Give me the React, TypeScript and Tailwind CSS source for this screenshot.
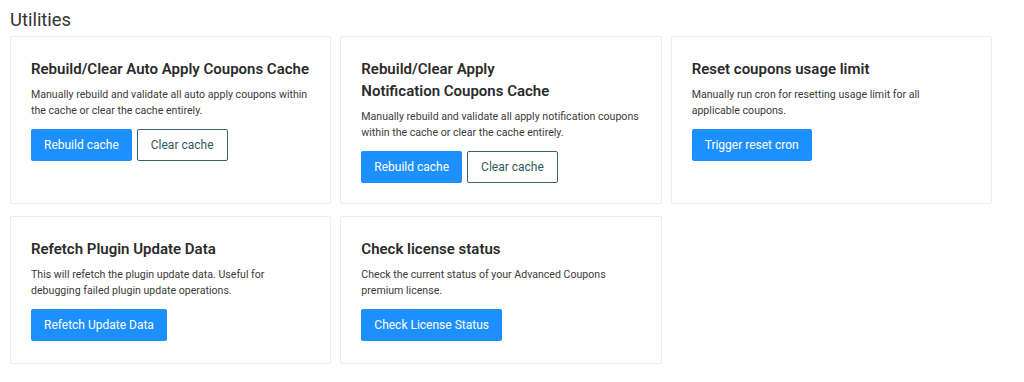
import React from "react";

interface Utility {
  title: React.ReactNode;
  desc: string;
  descWidth?: string;
  primary: string;
  secondary?: string;
}

const row1: Utility[] = [
  {
    title: "Rebuild/Clear Auto Apply Coupons Cache",
    desc: "Manually rebuild and validate all auto apply coupons within the cache or clear the cache entirely.",
    primary: "Rebuild cache",
    secondary: "Clear cache",
  },
  {
    title: (
      <>
        Rebuild/Clear Apply
        <br />
        Notification Coupons Cache
      </>
    ),
    desc: "Manually rebuild and validate all apply notification coupons within the cache or clear the cache entirely.",
    primary: "Rebuild cache",
    secondary: "Clear cache",
  },
  {
    title: "Reset coupons usage limit",
    desc: "Manually run cron for resetting usage limit for all applicable coupons.",
    descWidth: "max-w-[236px]",
    primary: "Trigger reset cron",
  },
];

const row2: Utility[] = [
  {
    title: "Refetch Plugin Update Data",
    desc: "This will refetch the plugin update data. Useful for debugging failed plugin update operations.",
    primary: "Refetch Update Data",
  },
  {
    title: "Check license status",
    desc: "Check the current status of your Advanced Coupons premium license.",
    primary: "Check License Status",
  },
];

function UtilityCard({ item, height }: { item: Utility; height: string }) {
  return (
    <div className={`${height} bg-white border border-[#ececec] rounded-[2px] px-[20px] pt-[21px]`}>
      <h3 className="text-[15px] leading-[22px] font-semibold text-[#2b2b2b]">{item.title}</h3>
      <p className={`mt-[7px] text-[10.6px] leading-[16px] text-[#3a3a3a] ${item.descWidth ?? ""}`}>{item.desc}</p>
      <div className="mt-[10px] flex gap-[5px]">
        <button className="h-[32px] px-[13px] rounded-[2px] bg-[#1e8fff] text-white text-[12px]">
          {item.primary}
        </button>
        {item.secondary && (
          <button className="h-[32px] px-[13px] rounded-[2px] border border-[#3a6468] bg-white text-[#2f5a60] text-[12px]">
            {item.secondary}
          </button>
        )}
      </div>
    </div>
  );
}

export default function App() {
  return (
    <div className="bg-white w-[1024px] h-[382px] px-[10px] pt-[8px] font-['Roboto',sans-serif]">
      <h2 className="text-[18.4px] leading-[24px] text-[#333]">Utilities</h2>
      <div className="mt-[4px] w-[982px] grid grid-cols-3 gap-x-[9px] gap-y-[12px] items-start">
        {row1.map((u, i) => (
          <UtilityCard key={i} item={u} height="h-[168px]" />
        ))}
        {row2.map((u, i) => (
          <UtilityCard key={i} item={u} height="h-[148px]" />
        ))}
      </div>
    </div>
  );
}
